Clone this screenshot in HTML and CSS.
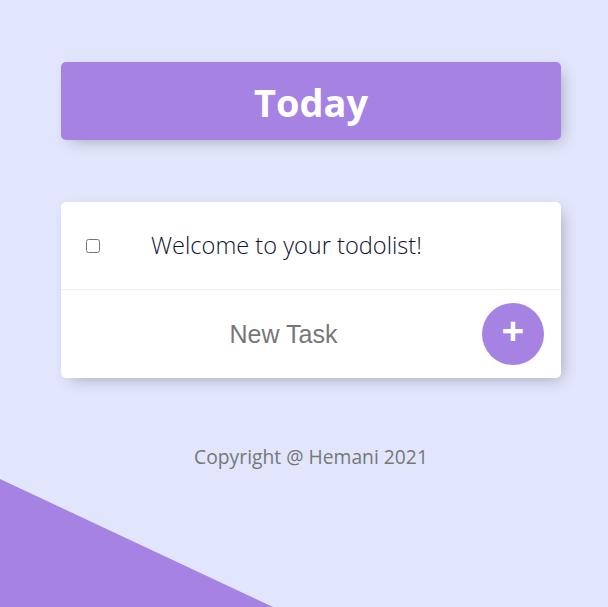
FILE: index.html
```html
<!DOCTYPE html>
<html>
<head>
<meta charset="utf-8">
<link rel="stylesheet" href="styles.css">
</head>
<body>
<div class="heading"><h1>Today</h1></div>
<div class="box">
  <div class="item">
    <input type="checkbox">
    <p>Welcome to your todolist!</p>
  </div>
  <form class="item new-item">
    <input type="text" class="task-input" placeholder="New Task" autocomplete="off">
    <button type="button" class="add">+</button>
  </form>
</div>
<footer>Copyright @ Hemani 2021</footer>
<div class="corner"></div>
</body>
</html>
```
FILE: styles.css
```css
html, body {
  margin: 0;
  padding: 0;
}
body {
  background-color: #e1e6fc;
  font-family: "Open Sans", "DejaVu Sans", sans-serif;
  min-height: 607px;
  overflow: hidden;
  padding: 62px 0 0 14px;
  box-sizing: border-box;
}
.heading {
  background-color: #a683e3;
  width: 500px;
  height: 78px;
  margin: 0 auto;
  border-radius: 5px;
  box-shadow: 5px 5px 15px -5px rgba(0, 0, 0, 0.3);
  display: flex;
  align-items: center;
  justify-content: center;
}
.heading h1 {
  margin: 0;
  color: #fff;
  font-size: 38px;
  font-weight: 700;
  line-height: 1;
  padding-top: 2px;
}
.box {
  width: 500px;
  margin: 62px auto 0;
  background: #fff;
  border-radius: 5px;
  box-shadow: 5px 5px 15px -5px rgba(0, 0, 0, 0.3);
}
.item {
  display: flex;
  align-items: center;
  height: 88px;
  border-bottom: 1px solid #f1f1f1;
  box-sizing: border-box;
}
.item input[type="checkbox"] {
  margin: 0 0 0 25px;
  width: 14px;
  height: 14px;
}
.item p {
  margin: 0 0 0 51px;
  font-size: 23.6px;
  font-weight: 300;
  color: #111133;
  padding-bottom: 2px;
}
.new-item {
  border-bottom: none;
  margin: 0;
}
.task-input {
  flex: 1;
  min-width: 0;
  border: none;
  outline: none;
  background: transparent;
  text-align: center;
  font-family: "Liberation Sans", Arial, sans-serif;
  font-size: 25px;
  color: #777;
  height: 60px;
  padding: 0;
  margin: 0 0 0 24px;
}
.task-input::placeholder {
  color: #777;
}
.add {
  flex: none;
  width: 62px;
  height: 62px;
  border-radius: 50%;
  border: none;
  background: #a683e3;
  color: #fff;
  font-size: 40px;
  font-weight: 700;
  font-family: "Open Sans", sans-serif;
  line-height: 1;
  padding: 0 0 8px 0;
  margin: 0 17px 0 0;
}
footer {
  text-align: center;
  color: #777;
  font-size: 19.3px;
  margin-top: 65px;
}
.corner {
  position: fixed;
  left: 0;
  bottom: 0;
  width: 0;
  height: 0;
  border-left: 273px solid #a683e3;
  border-top: 128px solid transparent;
}
```
